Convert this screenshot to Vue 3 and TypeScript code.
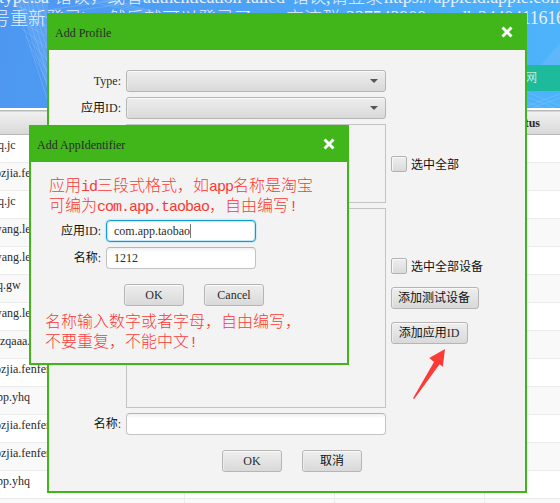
<script setup lang="ts">
interface Row { id: number; text: string; shift: number }

const names: [string, number][] = [
  ['q.jc', -2], ['ozjia.fenfen', -5], ['q.jc', -2], ['wang.lei', -7], ['wang.lei', -7],
  ['q.gw', -3], ['wang.lei', -7], ['zqaaa.xyz', 0], ['ozjia.fenfen', -5], ['pp.yhq', -3],
  ['ozjia.fenfen', -5], ['ozjia.fenfen', -5], ['pp.yhq', -3], ['', 0],
]
const rows: Row[] = names.map(([text, shift], id) => ({ id, text, shift }))
</script>

<template>
  <main class="screen">
    <header class="banner">
      <svg class="banner-art" width="560" height="108" viewBox="0 0 560 108">
        <g class="mesh">
          <path d="M12 -8L48 101M16 -8L49 92M20 -8L50 82M24 -8L51 72M28 -8L52 62M33 -8L53 52M38 -8L56 44M12 4L48 18M15 12L48 26M18 20L48 37M21 28L48 49M25 36L48 61M29 45L48 72M34 55L48 84M60 -4L150 14M75 -4L156 14M90 -3L160 14M100 -2L164 14M48 10L130 -2M52 14L150 0" />
          <path d="M527 92L560 106M527 97L560 110M527 102L548 110M527 106L560 94M532 108L560 98" />
        </g>
        <path class="glow" d="M14 0H48V92Q38 42 14 0Z" />
        <path class="glow" d="M541 65L560 43V65Z" />
        <g class="notice">
          <text x="-1" y="3" textLength="50">type.sa</text>
          <text x="54" y="3">错误，</text>
          <text x="107" y="3">或者</text>
          <text x="143" y="3" textLength="142">authentication failed</text>
          <text x="291" y="3" textLength="92">错误,请登录</text>
          <text x="384" y="3" textLength="180">https://appleid.apple.com</text>
          <text x="-8" y="25">号重新登录)，</text>
          <text x="108" y="25">然后就可以登录了。</text>
          <text x="286" y="25">交流群</text>
          <text x="346" y="24" textLength="80">227543908</text>
          <text x="449" y="24">qdb</text>
          <text x="478" y="24" textLength="87">2440411616</text>
        </g>
      </svg>
      <div class="site-link">网</div>
    </header>

    <section class="table">
      <div class="thead"><span>Status</span></div>
      <div v-for="row in rows" :key="row.id" class="row">
        <div class="cell"><span :style="{ marginLeft: row.shift + 'px' }">{{ row.text }}</span></div>
        <div class="cell"></div><div class="cell"></div><div class="cell"></div>
      </div>
    </section>

    <section class="dialog profile">
      <div class="title">
        <span>Add Profile</span>
        <svg class="close" width="12" height="12" viewBox="0 0 12 12"><path d="M1.5 1.5L10.5 10.5M10.5 1.5L1.5 10.5" /></svg>
      </div>
      <div class="profile-body">
        <label>Type:</label>
        <div class="combo"><i class="caret"></i></div>
        <span></span>
        <label><span class="cjk">应用</span>ID:</label>
        <div class="combo"><i class="caret"></i></div>
        <span></span>
        <span></span>
        <div class="list"></div>
        <div class="side"><div class="check"><i class="box"></i><span class="cjk">选中全部</span></div></div>
        <span></span>
        <div class="list"></div>
        <div class="side tools">
          <div class="check"><i class="box"></i><span class="cjk">选中全部设备</span></div>
          <button class="btn device"><span class="cjk">添加测试设备</span></button>
          <button class="btn app"><span class="cjk">添加应用</span>ID</button>
        </div>
        <label><span class="cjk">名称</span>:</label>
        <div class="field"></div>
        <span></span>
      </div>
      <div class="actions">
        <button class="btn">OK</button>
        <button class="btn"><span class="cjk">取消</span></button>
      </div>
    </section>

    <section class="dialog identifier">
      <div class="title">
        <span>Add AppIdentifier</span>
        <svg class="close" width="12" height="12" viewBox="0 0 12 12"><path d="M1.5 1.5L10.5 10.5M10.5 1.5L1.5 10.5" /></svg>
      </div>
      <div class="note first">
        <div>应用<b>id</b>三段式格式，如<b>app</b>名称是淘宝</div>
        <div>可编为<b>com.app.taobao</b>，自由编写<b>!</b></div>
      </div>
      <div class="id-form">
        <label><span class="cjk">应用</span>ID:</label>
        <div class="field focused">com.app.taobao<i class="cursor"></i></div>
        <label><span class="cjk">名称</span>:</label>
        <div class="field">1212</div>
      </div>
      <div class="actions">
        <button class="btn">OK</button>
        <button class="btn">Cancel</button>
      </div>
      <div class="note second">
        <div>名称输入数字或者字母，自由编写，</div>
        <div>不要重复，不能中文<b>!</b></div>
      </div>
    </section>

    <svg class="arrow" width="34" height="52" viewBox="412 348 34 52">
      <path d="M445 349L429.3 358L434 362L413 398.3L414.2 399L439.6 364.3L442.8 366.7Z" />
    </svg>
  </main>
</template>

<style>
body { margin: 0; overflow: hidden; }
</style>

<style scoped>
* { box-sizing: border-box; }
.screen {
  position: relative; width: 560px; height: 503px; overflow: hidden; background: #fff;
  font: 12px/16px "Liberation Serif", "Noto Sans CJK SC", serif; color: #2b2b2b;
}
.cjk { font-family: "Noto Sans CJK SC", sans-serif; line-height: 1; color: #111; }
.banner {
  display: flex; justify-content: flex-end; align-items: flex-start;
  height: 108px; padding-top: 65px; position: relative;
  background: linear-gradient(100deg, #4e97f1 0%, #4ca1f5 40%, #4db4fb 100%);
}
.banner-art { position: absolute; left: 0; top: 0; }
.mesh path { fill: none; stroke: #9ccafc; stroke-width: 0.8; opacity: 0.4; }
.glow { fill: #a5cdfa; opacity: 0.18; }
.notice text { fill: #e5f0fc; font: 300 18px "Liberation Serif", "Noto Sans CJK SC", serif; }
.site-link {
  position: relative; width: 60px; height: 26px; padding-left: 25px; background: #1dbb9c;
  color: #fff; font: 300 12px/24px "Noto Sans CJK SC", sans-serif;
}
.thead {
  height: 27px; display: flex; justify-content: flex-end; padding: 8px 20px 0 0;
  border-bottom: 1px solid #b8b8b8; font-weight: bold;
  background: linear-gradient(#fff 0 2px, #bababa 2px 3px, #f0f0f0 4px, #d9d9d9);
  line-height: 15px;
}
.row { display: grid; grid-template-columns: 185px 150px 150px 75px; height: 28px; background: #fff; border-bottom: 1px solid #ececec; }
.row:nth-child(odd) { background: #f9f9f9; }
.cell { padding-top: 2px; border-right: 1px solid #ececec; white-space: nowrap; overflow: hidden; }
.cell:last-child { border-right: 0; }
.dialog { position: absolute; background: #f3f3f3; border: 2px solid #40b61a; }
.title {
  display: flex; justify-content: space-between; align-items: center; height: 35px;
  background: #40b61a; padding: 0 12px 0 6px;
}
.close { margin-bottom: 2px; }
.close path { fill: none; stroke: #fff; stroke-width: 2.9; }
.profile { left: 47px; top: 13px; width: 480px; height: 480px; }
.profile-body {
  display: grid; grid-template-columns: 72px 260px 130px; column-gap: 5px; row-gap: 5px;
  grid-template-rows: 22px 22px 79px 200px 22px; padding-top: 20px;
}
label { text-align: right; line-height: 22px; height: 22px; white-space: nowrap; }
.combo, .btn {
  border: 1px solid #b5b5b5; border-radius: 3px; background: linear-gradient(#eeeeee, #d9d9d9);
  box-shadow: inset 0 1px 0 #fafafa, inset 1px 0 0 #ececec;
}
.combo { display: flex; align-items: center; justify-content: flex-end; padding-right: 7px; }
.caret { border: 4px solid transparent; border-top-color: #555; border-bottom: 0; }
.list { border: 1px solid #c3c3c3; }
.side { padding-top: 32px; }
.tools { padding-top: 50px; }
.check { display: flex; align-items: center; gap: 4px; height: 16px; }
.box { width: 16px; height: 16px; border: 1px solid #b2b2b2; border-radius: 2px; background: linear-gradient(#eee, #dadada); box-shadow: inset 1px 1px 0 #f8f8f8; }
.btn { display: block; height: 22px; width: 60px; padding: 0; font-family: inherit; font-size: 12px; line-height: 18px; color: #2b2b2b; text-align: center; white-space: nowrap; }
.device { width: 88px; margin-top: 13px; padding-right: 2px; }
.app { width: 77px; margin-top: 13px; padding-right: 1px; }
.field { height: 22px; border: 1px solid #c3c3c3; border-top-color: #b4b4b4; border-radius: 4px; background: linear-gradient(#f0f0f0, #fff 4px); padding-left: 7px; line-height: 20px; display: flex; align-items: center; }
.focused { border-color: #139cd3; background: #fff; box-shadow: 0 0 1px 1px #c9e9f5, inset 0 0 0 1px #c5e6f3; }
.cursor { width: 1px; height: 14px; background: #777; }
.actions { display: flex; gap: 20px; padding-top: 15px; }
.profile .actions { padding-left: 173px; }
.identifier .actions { padding-left: 93px; }
.identifier { left: 29px; top: 125px; width: 320px; height: 240px; }
.note { color: #fb3a35; font: 300 16px/20px "Noto Sans CJK SC", sans-serif; white-space: nowrap; }
.note div { height: 20px; }
.note b { font: 15px/16px "Liberation Mono", monospace; letter-spacing: -1px; }
.first { padding: 12px 0 0 18px; }
.id-form { display: grid; grid-template-columns: 70px 150px; grid-template-rows: 22px 22px; gap: 5px; padding-top: 6px; }
.second { padding: 4px 0 0 14px; }
.arrow { position: absolute; left: 412px; top: 348px; fill: #fc3b37; }
</style>
